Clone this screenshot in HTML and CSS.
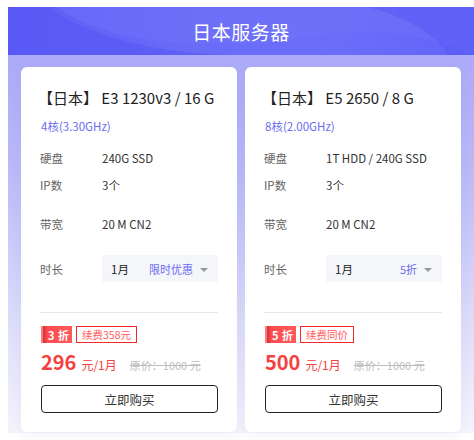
FILE: index.html
```html
<!DOCTYPE html>
<html lang="zh">
<head>
<meta charset="utf-8">
<link rel="stylesheet" href="styles.css">
</head>
<body>
<div class="wrap">
  <div class="header">
    <svg class="waves" width="466" height="48" viewBox="0 0 466 48" preserveAspectRatio="none">
      <path d="M40 0 C 80 30, 160 50, 240 48 L 0 48 L0 0 Z" fill="#5656f4" opacity="0.55"/>
      <path d="M50 0 C 90 35, 200 46, 300 30 C 360 20, 410 25, 466 48 L466 0 Z" fill="#7074f9" opacity="0.45"/>
      <path d="M360 0 C 400 10, 430 30, 440 48 L466 48 L466 0 Z" fill="#5a5af6" opacity="0.6"/>
    </svg>
    <span class="title">日本服务器</span>
  </div>
  <div class="band">
    <div class="card">
      <div class="name">【日本】 E3 1230v3 / 16 G</div>
      <div class="cpu">4核(3.30GHz)</div>
      <div class="row r1"><span class="lab">硬盘</span><span class="val">240G SSD</span></div>
      <div class="row r2"><span class="lab">IP数</span><span class="val">3个</span></div>
      <div class="row r3"><span class="lab">带宽</span><span class="val">20 M CN2</span></div>
      <div class="row r4"><span class="lab">时长</span>
        <div class="select"><span class="sv">1月</span><span class="tag">限时优惠</span><span class="arrow"></span></div>
      </div>
      <div class="divider"></div>
      <div class="badges"><span class="disc">3 折</span><span class="renew">续费358元</span></div>
      <div class="price"><span class="num">296</span><span class="unit">元/1月</span><span class="orig">原价：1000 元</span></div>
      <div class="buy">立即购买</div>
    </div>
    <div class="card">
      <div class="name">【日本】 E5 2650 / 8 G</div>
      <div class="cpu">8核(2.00GHz)</div>
      <div class="row r1"><span class="lab">硬盘</span><span class="val">1T HDD / 240G SSD</span></div>
      <div class="row r2"><span class="lab">IP数</span><span class="val">3个</span></div>
      <div class="row r3"><span class="lab">带宽</span><span class="val">20 M CN2</span></div>
      <div class="row r4"><span class="lab">时长</span>
        <div class="select"><span class="sv">1月</span><span class="tag">5折</span><span class="arrow"></span></div>
      </div>
      <div class="divider"></div>
      <div class="badges"><span class="disc">5 折</span><span class="renew">续费同价</span></div>
      <div class="price"><span class="num">500</span><span class="unit">元/1月</span><span class="orig">原价：1000 元</span></div>
      <div class="buy">立即购买</div>
    </div>
  </div>
</div>
</body>
</html>
```
FILE: styles.css
```css
* { box-sizing: border-box; }
html, body { margin: 0; padding: 0; background: #fff; overflow: hidden; }
body { font-family: "Noto Sans CJK SC", "Noto Sans", sans-serif; width: 474px; height: 440px; }
.wrap { width: 466px; margin: 7px 0 0 8px; }
.header {
  position: relative;
  height: 48px;
  background: linear-gradient(90deg, #5c5cf6 0%, #6a6cf8 40%, #6b6ef9 70%, #6263f7 100%);
  display: flex; align-items: center; justify-content: center;
  overflow: hidden;
}
.waves { position: absolute; left: 0; top: 0; }
.title { position: relative; color: #fff; font-size: 19px; letter-spacing: 0.5px; }
.band {
  background: linear-gradient(180deg, #aaaaf8 0%, #b9b9f8 30%, #dcdcfa 70%, #f4f4fd 100%);
  padding: 12px 13px 0 13px;
  display: flex; gap: 8px;
  height: 378px;
}
.card {
  width: 216px; height: 365px;
  background: #fff;
  border-radius: 6px;
  padding: 20px 19px 0 19px;
  display: flex; flex-direction: column;
  box-shadow: 0 4px 12px rgba(120,120,200,0.08);
}
.name { font-size: 15px; color: #222; line-height: 22px; height: 22px; white-space: nowrap; margin-left: -2px; }
.cpu { font-size: 11.5px; color: #6d6cf0; line-height: 16px; margin-top: 9px; margin-left: 1px; }
.row { display: flex; align-items: center; font-size: 11.5px; }
.lab { color: #666; width: 62px; }
.val { color: #333; }
.r1 { margin-top: 15px; height: 18px; }
.r2 { margin-top: 9px; height: 18px; }
.r3 { margin-top: 21px; height: 18px; }
.r4 { margin-top: 22px; height: 27px; }
.select {
  width: 116px; height: 27px; background: #f5f6fa;
  display: flex; align-items: center; padding: 0 10px 0 9px;
}
.sv { color: #222; font-size: 11.5px; flex: 1; }
.tag { color: #6d6cf0; font-size: 11px; }
.arrow { width: 0; height: 0; border-left: 4px solid transparent; border-right: 4px solid transparent; border-top: 4px solid #999; margin-left: 7px; margin-top: 2px; }
.divider { height: 1px; background: #e6e6ea; margin-top: 30px; }
.badges { display: flex; gap: 4px; margin-top: 13px; height: 17px; margin-left: 1px; }
.disc {
  width: 31px; height: 17px; color: #fff; font-size: 11px; font-weight: bold;
  background: linear-gradient(90deg, #ff7b7b 0, #ff7b7b 2px, #d9353a 2px, #e03a3e 4px, #ff4b4f 6px, #ff5a5c 100%);
  display: flex; align-items: center; padding-left: 7px; letter-spacing: 0.5px;
}
.renew {
  height: 17px; border: 1px solid #f02a2a; color: #ff5a5a; font-size: 10.5px;
  display: flex; align-items: center; padding: 0 5px;
}
.price { display: flex; align-items: baseline; margin-top: 4px; height: 26px; margin-left: 1px; }
.num { font-size: 20px; font-weight: bold; color: #f5403f; }
.unit { font-size: 12px; color: #f5403f; margin-left: 5px; }
.orig { font-size: 11px; color: #bdbdbd; text-decoration: line-through; margin-left: 13px; }
.buy {
  margin-top: 12px; height: 28px; border: 1px solid #222; border-radius: 4px;
  display: flex; align-items: center; justify-content: center;
  font-size: 12.5px; color: #333; margin-left: 1px;
}
```
